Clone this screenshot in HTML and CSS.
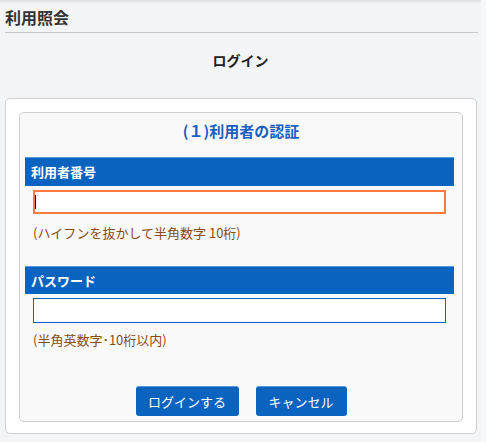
FILE: index.html
```html
<!DOCTYPE html>
<html lang="ja">
<head>
<meta charset="utf-8">
<title>利用照会</title>
<link rel="stylesheet" href="styles.css">
</head>
<body>
<div class="page">
  <div class="topshade"></div>
  <header class="header">
    <h1 class="header-title">利用照会</h1>
  </header>
  <div class="subtitle">ログイン</div>
  <section class="outer-card">
    <div class="inner-card">
      <h2 class="section-title">(１)利用者の認証</h2>
      <div class="bar">利用者番号</div>
      <div class="field">
        <div class="input-wrap">
          <input class="input input-focus" type="text" aria-label="利用者番号">
          <span class="caret"></span>
        </div>
        <div class="hint">(ハイフンを抜かして半角数字 10桁)</div>
      </div>
      <div class="bar bar-second">パスワード</div>
      <div class="field">
        <div class="input-wrap">
          <input class="input input-normal" type="password" aria-label="パスワード">
        </div>
        <div class="hint hint-second">(半角英数字･10桁以内)</div>
      </div>
      <div class="buttons">
        <button class="btn btn-login" type="button">ログインする</button>
        <button class="btn btn-cancel" type="button">キャンセル</button>
      </div>
    </div>
  </section>
</div>
</body>
</html>
```

FILE: styles.css
```css
html, body {
  margin: 0;
  padding: 0;
}
body {
  background: #f6f7f9;
  font-family: "Noto Sans CJK JP", "Noto Sans", "Liberation Sans", sans-serif;
  font-size: 13px;
  color: #333;
}
.page {
  width: 481px;
  min-height: 442px;
  background: #f3f4f6;
  position: relative;
}
.topshade {
  position: absolute;
  left: 0;
  top: 0;
  width: 481px;
  height: 3px;
  background: linear-gradient(#dadbdd, rgba(243,244,246,0));
}
.header {
  margin: 0 3px 0 5px;
  height: 33px;
  border-bottom: 1px solid #c8c8c8;
  box-sizing: border-box;
}
.header-title {
  margin: 0;
  font-size: 16px;
  font-weight: bold;
  line-height: 34px;
  color: #333;
}
.subtitle {
  text-align: center;
  font-size: 14px;
  font-weight: bold;
  color: #222;
  line-height: 20px;
  padding-top: 17px;
  height: 48px;
  box-sizing: border-box;
}
.outer-card {
  margin: 17px 0 0 5px;
  width: 472px;
  height: 336px;
  box-sizing: border-box;
  background: #fff;
  border: 1px solid #cfcfcf;
  border-radius: 5px;
  padding: 13px 13px 0 13px;
}
.inner-card {
  background: #f9f9f9;
  border: 1px solid #cfcfcf;
  border-radius: 5px;
  height: 310px;
  box-sizing: border-box;
  padding: 0 8px 0 5px;
}
.section-title {
  margin: 0;
  padding-top: 8px;
  line-height: 20px;
  font-size: 15px;
  font-weight: bold;
  color: #1a5fbe;
  text-align: center;
  margin-left: 3px;
}
.bar {
  margin-top: 16px;
  height: 29px;
  line-height: 28px;
  background: #0b63c0;
  border-top: 1px solid #5a95d6;
  box-sizing: border-box;
  color: #fff;
  font-weight: bold;
  font-size: 13px;
  padding-left: 6px;
}
.bar-second {
  margin-top: 24px;
  height: 28px;
}
.field {
  padding: 0 8px;
}
.input-wrap {
  position: relative;
  margin-top: 4px;
}
.input {
  display: block;
  width: 100%;
  height: 24px;
  box-sizing: border-box;
  margin: 0;
  padding: 0 4px;
  background: #fff;
  outline: none;
  font: inherit;
}
.input-focus {
  border: 2px solid #ff7a3c;
}
.input-normal {
  border: 1px solid #0b63c0;
  height: 25px;
}
.caret {
  position: absolute;
  left: 2px;
  top: 5px;
  width: 1px;
  height: 14px;
  background: #000;
}
.hint {
  margin-top: 10px;
  line-height: 18px;
  font-size: 13px;
  color: #8a4a10;
}
.hint-second {
  margin-top: 8px;
}
.buttons {
  display: flex;
  justify-content: center;
  gap: 17px;
  margin-top: 37px;
  margin-left: 3px;
}
.btn {
  height: 30px;
  box-sizing: border-box;
  background: #0b63c0;
  color: #fff;
  border: none;
  border-top: 1px solid #5a95d6;
  border-radius: 3px;
  font: inherit;
  font-size: 13px;
  padding: 0;
  line-height: 28px;
}
.btn-login {
  width: 103px;
}
.btn-cancel {
  width: 91px;
}
```
